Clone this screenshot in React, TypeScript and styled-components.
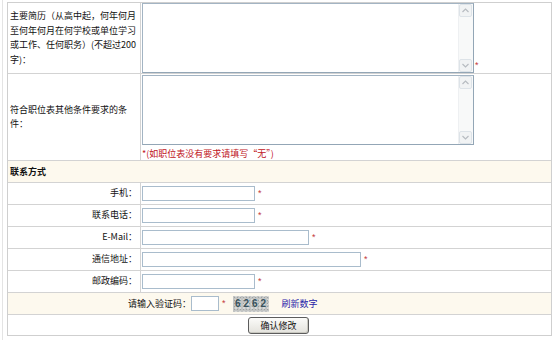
import React from "react";
import styled, { createGlobalStyle } from "styled-components";

const GlobalStyle = createGlobalStyle`
  html, body {
    margin: 0;
    padding: 0;
    background: #fff;
  }
  body {
    font-family: "Noto Sans CJK SC", "Liberation Sans", sans-serif;
    font-size: 9px;
    color: #111;
  }
`;

const Page = styled.div`
  width: 552px;
  height: 340px;
  margin-left: 2px;
  padding: 2px 0 0 4px;
  box-sizing: border-box;
  border-left: 1px solid #e4e4e4;
`;

const Frame = styled.div`
  width: 545px;
  box-sizing: border-box;
  border: 1px solid #cfcfcf;
`;

const Row = styled.div<{ $h: number; $cream?: boolean; $split?: boolean }>`
  display: ${(p) => (p.$split ? "grid" : "flex")};
  grid-template-columns: 133px 1fr;
  align-items: stretch;
  height: ${(p) => p.$h}px;
  background: ${(p) => (p.$cream ? "#fdf9ee" : "#fff")};

  & + & {
    border-top: 1px solid #d3d3d3;
  }
`;

const LabelCell = styled.div<{ $right?: boolean }>`
  display: flex;
  align-items: center;
  justify-content: ${(p) => (p.$right ? "flex-end" : "flex-start")};
  padding: 0 3px 0 2px;
  border-right: 1px solid #d3d3d3;
  line-height: 14.5px;
  text-align: ${(p) => (p.$right ? "right" : "left")};
`;

const FieldCell = styled.div<{ $top?: boolean }>`
  display: flex;
  flex-direction: ${(p) => (p.$top ? "column" : "row")};
  align-items: ${(p) => (p.$top ? "flex-start" : "center")};
  padding-left: 1px;
`;

const AreaLine = styled.div<{ $pad?: number }>`
  display: flex;
  align-items: flex-end;
  margin-top: ${(p) => p.$pad ?? 0}px;
`;

const TextBox = styled.div`
  display: flex;
  width: 332px;
  height: 70px;
  box-sizing: border-box;
  border: 1px solid #a3b4c3;
  border-right-color: #93a6b6;
  border-bottom-color: #93a6b6;
  background: #fff;
`;

const Area = styled.textarea`
  flex: 1;
  border: none;
  outline: none;
  resize: none;
  padding: 2px;
  font: inherit;
  background: transparent;
`;

const Rail = styled.div`
  width: 14px;
  display: flex;
  flex-direction: column;
  justify-content: space-between;
  background: #f8f9f9;
  border-left: 1px solid #eef0f2;
`;

const ArrowBtn = styled.div`
  width: 13px;
  height: 13px;
  box-sizing: border-box;
  border: 1px solid #dde3e8;
  border-radius: 2px;
  background: #f1f3f4;
  display: flex;
  align-items: center;
  justify-content: center;
`;

const Star = styled.span<{ $gap?: number }>`
  color: #c4383c;
  font-family: "Liberation Sans", sans-serif;
  font-size: 9px;
  margin-left: ${(p) => p.$gap ?? 3}px;
  line-height: 9px;
  margin-bottom: ${(p) => (p.$gap === 1 ? 3 : 0)}px;
`;

const Note = styled.div`
  color: #c0141c;
  margin-top: 3px;
  line-height: 12px;
`;

const Input = styled.input<{ $w: number }>`
  width: ${(p) => p.$w}px;
  height: 15px;
  box-sizing: border-box;
  border: 1px solid #a9bccc;
  padding: 0 2px;
  font: inherit;
  outline: none;
`;

const SectionTitle = styled.div`
  display: flex;
  align-items: center;
  padding-left: 2px;
  font-weight: bold;
`;

const CodeLine = styled.div`
  display: flex;
  align-items: center;
  padding-left: 120px;
`;

const Captcha = styled.span`
  display: inline-flex;
  align-items: center;
  justify-content: center;
  width: 36px;
  height: 16px;
  margin-left: 7px;
  background-color: #c2c4c3;
  background-image: radial-gradient(#9ea2a2 0.6px, transparent 0.9px),
    radial-gradient(#e4e6e5 0.6px, transparent 0.9px);
  background-size: 3px 3px, 4px 4px;
  background-position: 0 0, 1px 2px;
  color: #38525c;
  font-family: "Liberation Sans", sans-serif;
  font-weight: bold;
  font-size: 10px;
  letter-spacing: 3px;
  padding-left: 3px;
  box-sizing: border-box;
`;

const Refresh = styled.a`
  color: #1f23a8;
  text-decoration: none;
  margin-left: 13px;
  cursor: pointer;
`;

const ButtonLine = styled.div`
  flex: 1;
  display: flex;
  align-items: center;
  justify-content: center;
  padding-right: 2px;
`;

const Submit = styled.button`
  width: 61px;
  height: 17px;
  padding: 0;
  font: inherit;
  color: #111;
  border: 1px solid #5c5c5c;
  border-radius: 3px;
  background: linear-gradient(#fbfbf9, #e3e2dc);
  box-shadow: inset -1px -1px 0 #c9c8c0;
`;

const Chevron = ({ up }: { up?: boolean }) => (
  <svg width="7" height="5" viewBox="0 0 7 5">
    <path
      d={up ? "M0.5 4 L3.5 1 L6.5 4" : "M0.5 1 L3.5 4 L6.5 1"}
      fill="none"
      stroke="#b7bcc1"
      strokeWidth="1.2"
    />
  </svg>
);

const ScrollArea = () => (
  <TextBox>
    <Area />
    <Rail>
      <ArrowBtn>
        <Chevron up />
      </ArrowBtn>
      <ArrowBtn>
        <Chevron />
      </ArrowBtn>
    </Rail>
  </TextBox>
);

const contacts: { label: string; w: number }[] = [
  { label: "手机：", w: 113 },
  { label: "联系电话：", w: 113 },
  { label: "E-Mail：", w: 167 },
  { label: "通信地址：", w: 219 },
  { label: "邮政编码：", w: 113 },
];

export default function App() {
  return (
    <Page>
      <GlobalStyle />
      <Frame>
        <Row $h={70} $split>
          <LabelCell>
            <div>
              主要简历（从高中起，何年何月
              <br />
              至何年何月在何学校或单位学习
              <br />
              或工作、任何职务）(不超过200
              <br />
              字)：
            </div>
          </LabelCell>
          <FieldCell $top>
            <AreaLine>
              <ScrollArea />
              <Star $gap={1}>*</Star>
            </AreaLine>
          </FieldCell>
        </Row>
        <Row $h={86} $split>
          <LabelCell>
            <div>
              符合职位表其他条件要求的条
              <br />
              件：
            </div>
          </LabelCell>
          <FieldCell $top>
            <AreaLine $pad={1}>
              <ScrollArea />
            </AreaLine>
            <Note>*(如职位表没有要求请填写“无”)</Note>
          </FieldCell>
        </Row>
        <Row $h={21} $cream>
          <SectionTitle>联系方式</SectionTitle>
        </Row>
        {contacts.map((c) => (
          <Row key={c.label} $h={21} $split>
            <LabelCell $right>{c.label}</LabelCell>
            <FieldCell>
              <Input $w={c.w} />
              <Star>*</Star>
            </FieldCell>
          </Row>
        ))}
        <Row $h={21} $cream>
          <CodeLine>
            请输入验证码：
            <Input $w={28} />
            <Star>*</Star>
            <Captcha>6262</Captcha>
            <Refresh>刷新数字</Refresh>
          </CodeLine>
        </Row>
        <Row $h={20}>
          <ButtonLine>
            <Submit type="button">确认修改</Submit>
          </ButtonLine>
        </Row>
      </Frame>
    </Page>
  );
}
